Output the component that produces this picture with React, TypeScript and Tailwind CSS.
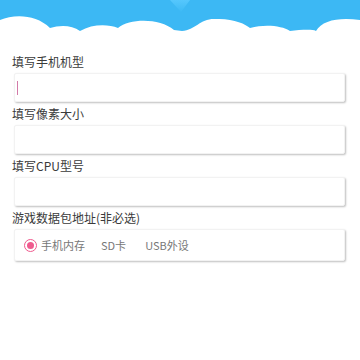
import React from "react";

function Header() {
  return (
    <svg width="360" height="36" viewBox="0 0 360 36" className="block">
      <defs>
        <linearGradient id="tri" x1="0" y1="0" x2="0" y2="1">
          <stop offset="0" stopColor="#5ccbff" />
          <stop offset="1" stopColor="#3dbaf5" />
        </linearGradient>
      </defs>
      <rect x="0" y="0" width="360" height="36" fill="#3cb8f4" />
      <path d="M170 0 L190 0 L181 12 Z" fill="url(#tri)" opacity="0.8" />
      <path
        d="M0 20 C14 14 36 14 50 28 C60 25 72 25 80 31 C92 24 108 24 118 28 C130 18 160 18 174 30 L182 31 C196 30 200 18 216 19 C232 18 246 24 250 28 C266 24 282 26 290 31 C300 30 312 29 316 31 C322 20 340 17 360 20 L360 36 L0 36 Z"
        fill="#ffffff"
      />
    </svg>
  );
}

function Box({ children }: { children?: React.ReactNode }) {
  return (
    <div className="ml-[14px] w-[331px] bg-white rounded-[2px] border border-[#f2f2f2] shadow-[1px_1px_2px_rgba(0,0,0,0.25)] flex items-center">
      {children}
    </div>
  );
}

export default function App() {
  return (
    <div
      className="w-[360px] h-[360px] bg-white overflow-hidden"
      style={{ fontFamily: '"Noto Sans CJK SC", "Noto Sans", sans-serif' }}
    >
      <Header />
      <div className="flex flex-col">
        <div className="pl-[12px] text-[12px] leading-[16px] text-[#3a3a3a] mt-[18px]">填写手机机型</div>
        <div className="mt-[3px]">
          <Box>
            <div className="h-[27px] flex items-center pl-[2px]">
              <div className="w-[1px] h-[14px] bg-[#d27aa8]" />
            </div>
          </Box>
        </div>
        <div className="pl-[12px] text-[12px] leading-[16px] text-[#3a3a3a] mt-[4px]">填写像素大小</div>
        <div className="mt-[3px]">
          <Box>
            <div className="h-[27px]" />
          </Box>
        </div>
        <div className="pl-[12px] text-[12px] leading-[16px] text-[#3a3a3a] mt-[4px]">填写CPU型号</div>
        <div className="mt-[3px]">
          <Box>
            <div className="h-[27px]" />
          </Box>
        </div>
        <div className="pl-[12px] text-[12px] leading-[16px] text-[#3a3a3a] mt-[4px]">游戏数据包地址(非必选)</div>
        <div className="mt-[3px]">
          <Box>
            <div className="h-[30px] flex items-center pl-[9px] text-[11px] text-[#777]">
              <div className="w-[13px] h-[13px] rounded-full border-[1.5px] border-[#ef5a8e] flex items-center justify-center">
                <div className="w-[7px] h-[7px] rounded-full bg-[#ef5a8e]" />
              </div>
              <span className="ml-[4px]">手机内存</span>
              <span className="ml-[16px]">SD卡</span>
              <span className="ml-[19px]">USB外设</span>
            </div>
          </Box>
        </div>
      </div>
    </div>
  );
}
